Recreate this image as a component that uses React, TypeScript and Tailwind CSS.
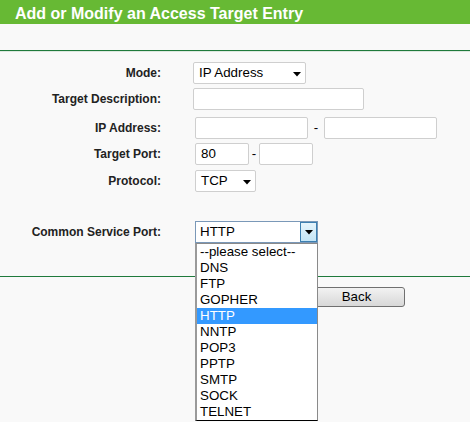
import React from 'react';

// ===================================
// Access Target Entry form
// ===================================

const services = [
  '--please select--',
  'DNS',
  'FTP',
  'GOPHER',
  'HTTP',
  'NNTP',
  'POP3',
  'PPTP',
  'SMTP',
  'SOCK',
  'TELNET',
];

function Arrow() {
  return (
    <svg width="8" height="5" viewBox="0 0 8 5" className="block">
      <polygon points="0,0 8,0 4,4.5" fill="#000" />
    </svg>
  );
}

function Label({ children }: { children: React.ReactNode }) {
  return (
    <div className="w-[161px] shrink-0 text-right text-[12px] font-bold text-[#222]">
      {children}
    </div>
  );
}

function TextBox({ width, value }: { width: string; value?: string }) {
  return (
    <div
      className={`${width} h-[22px] bg-white border border-[#cfcfcf] rounded-[2px] pl-[5px] text-[13.33px] leading-[20px] text-black`}
    >
      {value}
    </div>
  );
}

function Select({ width, value }: { width: string; value: string }) {
  return (
    <div
      className={`${width} h-[22px] bg-white border border-[#cfcfcf] rounded-[2px] pl-[5px] pr-[4px] flex items-center justify-between text-[13.33px] text-black`}
    >
      <span>{value}</span>
      <span className="pt-[3px]">
        <Arrow />
      </span>
    </div>
  );
}

export default function App() {
  return (
    <div className="relative w-[470px] h-[422px] overflow-hidden bg-[#f9f9f9] font-['Liberation_Sans',Arial,sans-serif]">
      {/* Header */}
      <div className="h-[24px] bg-[#67b934] pl-[15px] pt-[3px] text-[16px] font-bold leading-[21px] text-white">
        Add or Modify an Access Target Entry
      </div>
      <div className="h-[26px]" />
      <div className="h-px bg-[#1f7a3c]" />
      <div className="h-px bg-[#dde8df]" />

      {/* Form */}
      <div className="flex flex-col">
        <div className="mt-[10px] flex h-[22px] items-center">
          <Label>Mode:</Label>
          <div className="ml-[32px]">
            <Select width="w-[113px]" value="IP Address" />
          </div>
        </div>

        <div className="mt-[4px] flex h-[22px] items-center">
          <Label>Target Description:</Label>
          <div className="ml-[32px]">
            <TextBox width="w-[171px]" />
          </div>
        </div>

        <div className="mt-[7px] flex h-[22px] items-center">
          <Label>IP Address:</Label>
          <div className="ml-[34px] flex items-center">
            <TextBox width="w-[113px]" />
            <span className="w-[16px] text-center text-[13.33px] text-black">-</span>
            <TextBox width="w-[113px]" />
          </div>
        </div>

        <div className="mt-[4px] flex h-[22px] items-center">
          <Label>Target Port:</Label>
          <div className="ml-[34px] flex items-center">
            <TextBox width="w-[54px]" value="80" />
            <span className="w-[10px] text-center text-[13.33px] text-black">-</span>
            <TextBox width="w-[54px]" />
          </div>
        </div>

        <div className="mt-[5px] flex h-[22px] items-center">
          <Label>Protocol:</Label>
          <div className="ml-[34px]">
            <Select width="w-[61px]" value="TCP" />
          </div>
        </div>

        <div className="mt-[29px] flex h-[22px] items-center">
          <Label>Common Service Port:</Label>
          <div className="ml-[34px]">
            <div className="flex h-[22px] w-[123px] items-stretch border border-[#7a98b8] bg-white text-[13.33px] text-black">
              <div className="flex flex-1 items-center pl-[4px]">HTTP</div>
              <div className="flex w-[17px] items-center justify-center border border-[#3c7fb1] bg-gradient-to-b from-[#e5f4fc] to-[#c4e5f6]">
                <Arrow />
              </div>
            </div>
          </div>
        </div>

        <div className="mt-[33px] h-px bg-[#1f7a3c]" />

        <div className="mt-[10px] flex">
          <button className="ml-[308px] h-[20px] w-[97px] rounded-[3px] border border-[#707070] bg-gradient-to-b from-[#f2f2f2] to-[#d8d8d8] text-[13.33px] leading-[18px] text-black">
            Back
          </button>
        </div>
      </div>

      {/* Open dropdown list */}
      <div className="absolute left-[195px] top-[243px] w-[123px] border border-[#8a8a8a] border-l-2 border-l-[#9a9a9a] border-b-black bg-white text-[13.33px] text-black">
        {services.map((s) => (
          <div
            key={s}
            className={
              s === 'HTTP'
                ? 'h-[16px] bg-[#3399ff] pl-[3px] leading-[16px] text-white'
                : 'h-[16px] pl-[3px] leading-[16px]'
            }
          >
            {s}
          </div>
        ))}
      </div>
    </div>
  );
}
